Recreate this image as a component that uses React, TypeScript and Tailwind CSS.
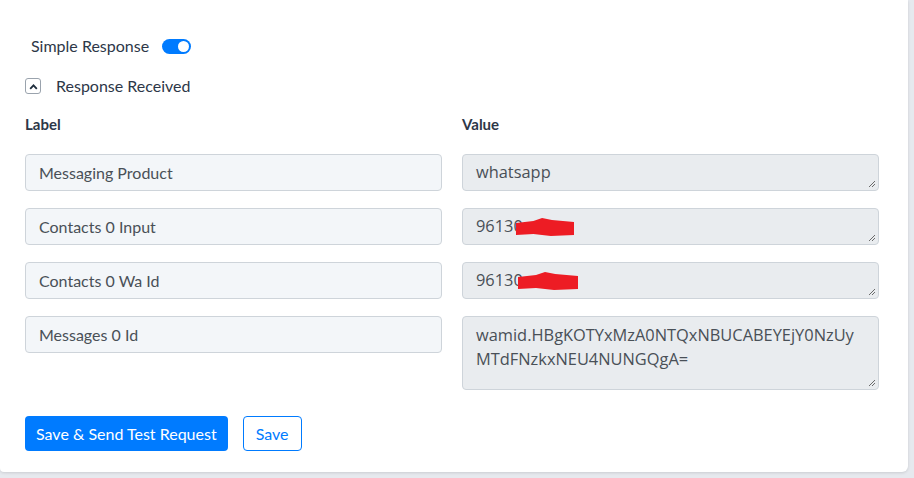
import React from "react";

const labelFont = { fontFamily: "Lato, 'Noto Sans', sans-serif" };

function Redact({ w, left }: { w: number; left: number }) {
  return (
    <svg width={w} height="18" viewBox={`0 0 ${w} 18`} className="absolute top-[4px]" style={{ left }}>
      <path d={`M0 5 L${w * 0.3} 3 L${w * 0.45} 0 L${w * 0.62} 2 L${w} 4 L${w} 17 L${w * 0.6} 18 L${w * 0.3} 16 L0 17 Z`} fill="#ed1c24" />
    </svg>
  );
}

function ValueBox({ text, redact, tall }: { text: React.ReactNode; redact?: [number, number]; tall?: boolean }) {
  return (
    <div
      className={`relative rounded-[4px] border border-[#ced4da] bg-[#e9ecef] pl-[13px] pr-[20px] text-[16.4px] leading-[24px] text-[#495057] ${tall ? "h-[74px] pt-[6px]" : "h-[37px] pt-[5px]"}`}
      style={{ fontFamily: "'Segoe UI', 'Open Sans', 'Noto Sans', sans-serif" }}
    >
      <span className="relative inline-block">
        {text}
        {redact ? <Redact w={redact[1]} left={redact[0]} /> : null}
      </span>
      <svg width="9" height="9" viewBox="0 0 9 9" className="absolute right-[2px] bottom-[2px]">
        <path d="M8 2 L2 8 M8 5 L5 8" stroke="#6b6b6b" strokeWidth="1" />
      </svg>
    </div>
  );
}

function LabelBox({ text }: { text: string }) {
  return (
    <div className="h-[37px] rounded-[4px] border border-[#ced4da] bg-[#f3f6f9] pl-[13px] flex items-center text-[16px] text-[#495057]" style={labelFont}>
      {text}
    </div>
  );
}

export default function App() {
  const rows: { label: string; value: React.ReactNode; redact?: [number, number]; tall?: boolean }[] = [
    { label: "Messaging Product", value: "whatsapp" },
    { label: "Contacts 0 Input", value: "96130", redact: [40, 58] },
    { label: "Contacts 0 Wa Id", value: "96130", redact: [42, 60] },
    {
      label: "Messages 0 Id",
      value: (
        <>
          wamid.HBgKOTYxMzA0NTQxNBUCABEYEjY0NzUy
          <br />
          MTdFNzkxNEU4NUNGQgA=
        </>
      ),
      tall: true,
    },
  ];
  return (
    <div className="w-[914px] h-[478px] bg-[#e6e9ee] overflow-hidden">
      <div className="w-[908px] h-[472px] bg-white rounded-br-[6px] rounded-bl-[4px] shadow-[0_1px_3px_rgba(0,0,0,0.12)] pl-[25px] pt-[36px]" style={labelFont}>
        <div className="flex items-center h-[20px] pl-[6px]">
          <span className="text-[16px] text-[#2d3748]">Simple Response</span>
          <div className="ml-[13px] w-[29px] h-[15px] rounded-full bg-[#007bff] relative">
            <div className="absolute right-[2px] top-[2px] w-[11px] h-[11px] rounded-full bg-white" />
          </div>
        </div>
        <div className="flex items-center mt-[21px] h-[18px]">
          <div className="w-[16px] h-[16px] rounded-[3px] border border-[#9aa3ad] flex items-center justify-center">
            <svg width="9" height="7" viewBox="0 0 9 7">
              <path d="M1.2 5.8 L4.5 2.3 L7.8 5.8" fill="none" stroke="#1f2d3d" strokeWidth="1.8" />
            </svg>
          </div>
          <span className="ml-[15px] text-[16px] text-[#2d3748]">Response Received</span>
        </div>
        <div className="grid grid-cols-[417px_417px] gap-x-[20px] mt-[20px] w-[854px]">
          <div className="text-[15px] font-bold text-[#2d3748] h-[18px] leading-[18px]">Label</div>
          <div className="text-[15px] font-bold text-[#2d3748] h-[18px] leading-[18px]">Value</div>
        </div>
        <div className="grid grid-cols-[417px_417px] gap-x-[20px] gap-y-[17px] mt-[21px] w-[854px] items-start">
          {rows.map((r) => (
            <React.Fragment key={r.label}>
              <LabelBox text={r.label} />
              <ValueBox text={r.value} redact={r.redact} tall={r.tall} />
            </React.Fragment>
          ))}
        </div>
        <div className="flex gap-[15px] mt-[26px]">
          <button className="h-[35px] px-[11px] rounded-[4px] bg-[#007bff] text-white text-[16px]">Save &amp; Send Test Request</button>
          <button className="h-[35px] px-[12px] rounded-[4px] border border-[#007bff] bg-white text-[#007bff] text-[16px]">Save</button>
        </div>
      </div>
    </div>
  );
}
